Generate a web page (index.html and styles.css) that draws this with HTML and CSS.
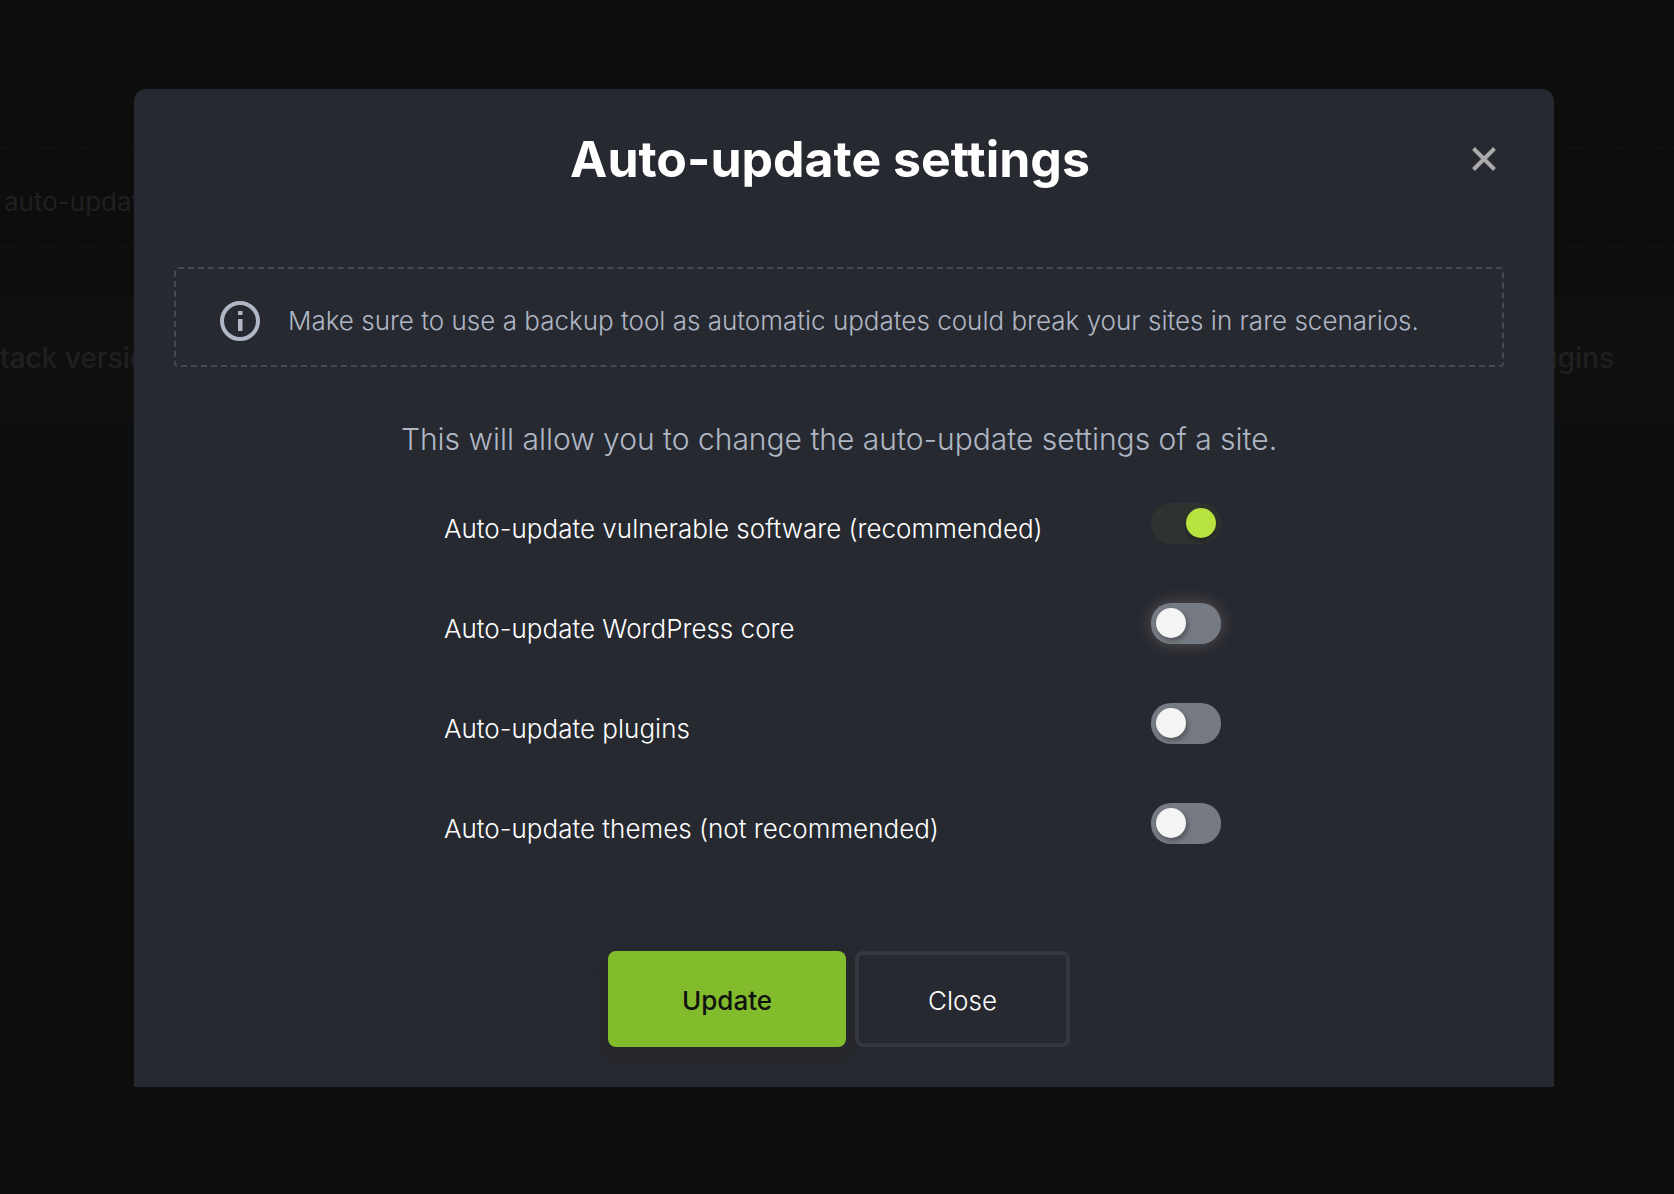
FILE: index.html
```html
<!DOCTYPE html>
<html lang="en">
<head>
<meta charset="utf-8">
<meta name="viewport" content="width=device-width, initial-scale=1">
<title>Auto-update settings</title>
<link rel="stylesheet" href="styles.css">
</head>
<body>
<main class="page" aria-hidden="true">
  <div class="page-notice">auto-update</div>
  <div class="sites">
    <div class="sites-head"><span>tack version</span><span>Plugins</span></div>
    <div class="sites-body"></div>
  </div>
</main>
<div class="overlay">
  <section class="modal" role="dialog" aria-modal="true" aria-labelledby="modal-title">
    <header class="modal-header">
      <h1 class="modal-title" id="modal-title">Auto-update settings</h1>
      <button class="modal-x" type="button" aria-label="Close dialog">
        <svg width="24" height="24" viewBox="0 0 24 24" fill="none" stroke="currentColor" stroke-width="4" stroke-linecap="butt"><path d="M1.500 1.500l21 21M22.500 1.500l-21 21"/></svg>
      </button>
    </header>
    <div class="alert">
      <svg class="alert-icon" width="40" height="40" viewBox="0 0 40 40"><circle cx="20" cy="20" r="18" fill="none" stroke="currentColor" stroke-width="4"/><path fill="currentColor" d="M18 10h4.500v4H18zM18 18h4.500v12H18z"/></svg>
      <p class="alert-text">Make sure to use a backup tool as automatic updates could break your sites in rare scenarios.</p>
    </div>
    <p class="description">This will allow you to change the auto-update settings of a site.</p>
    <form class="settings">
      <div class="setting">
        <label class="setting-label" for="vulnerable">Auto-update vulnerable software (recommended)</label>
        <input class="toggle" type="checkbox" id="vulnerable" checked>
      </div>
      <div class="setting">
        <label class="setting-label" for="core">Auto-update WordPress core</label>
        <input class="toggle toggle-focus" type="checkbox" id="core">
      </div>
      <div class="setting">
        <label class="setting-label" for="plugins">Auto-update plugins</label>
        <input class="toggle" type="checkbox" id="plugins">
      </div>
      <div class="setting">
        <label class="setting-label" for="themes">Auto-update themes (not recommended)</label>
        <input class="toggle" type="checkbox" id="themes">
      </div>
    </form>
    <footer class="actions">
      <button class="button button-primary" type="button">Update</button>
      <button class="button button-secondary" type="button">Close</button>
    </footer>
  </section>
</div>
</body>
</html>
```
FILE: styles.css
```css
* {
  box-sizing: border-box;
}

body {
  margin: 0;
  background: #0d0d0d;
  color: #fff;
  font-family: Inter, "Liberation Sans", sans-serif;
}

h1,
p {
  margin: 0;
}

/* Dimmed page behind the dialog */
.page {
  min-height: 100vh;
  padding-top: 147px;
  color: #1f2021;
}

.page-notice {
  height: 101px;
  padding-left: 4px;
  border: dashed #111;
  border-width: 2px 0;
  font-size: 26px;
  line-height: 106px;
}

.sites {
  margin-top: 48px;
}

.sites-head {
  display: flex;
  justify-content: space-between;
  padding: 32px 60px 32px 0;
  background: #0f0f0f;
  font-size: 28px;
  font-weight: 500;
  line-height: 60px;
}

.sites-body {
  height: 424px;
  background: #0c0e10;
  border-bottom: 3px solid #0f0f0f;
}

/* Dialog */
.overlay {
  position: absolute;
  inset: 0;
  padding: 89px 120px 0 134px;
}

.modal {
  padding: 40px 50px 40px 40px;
  border-radius: 12px 12px 0 0;
  background: #272930;
}

.modal-header {
  display: flex;
  align-items: center;
  padding-left: 22px;
}

.modal-title {
  flex: 1;
  font-size: 50px;
  font-weight: 700;
  line-height: 60px;
  text-align: center;
}

.modal-x {
  display: grid;
  place-items: center;
  width: 40px;
  height: 40px;
  padding: 0;
  border: 0;
  background: none;
  color: #aaa;
}

.alert {
  display: flex;
  align-items: center;
  gap: 28px;
  min-height: 100px;
  margin-top: 78px;
  padding: 8px 44px 0;
  border: 2px dashed #464953;
  border-radius: 4px;
  color: #afb6c4;
}

.alert-icon {
  flex: none;
}

.alert-text {
  font-size: 26px;
  font-weight: 300;
  line-height: 40px;
}

.description {
  margin-top: 52px;
  color: #afb6c4;
  font-size: 30px;
  font-weight: 300;
  line-height: 40px;
  text-align: center;
}

.settings {
  margin-top: 14px;
  padding: 0 283px 0 270px;
}

.setting {
  display: flex;
  align-items: center;
  justify-content: space-between;
  height: 100px;
}

.setting-label {
  padding-top: 12px;
  font-size: 26px;
  font-weight: 300;
  line-height: 40px;
}

.toggle {
  flex: none;
  appearance: none;
  width: 70px;
  height: 41px;
  margin: 0;
  padding: 5px;
  border-radius: 20px;
  background: #767a82;
}

.toggle::before {
  content: "";
  display: block;
  width: 30px;
  height: 30px;
  border-radius: 50%;
  background: #f4f4f4;
  box-shadow: 2px 3px 5px rgba(0, 0, 0, 0.3);
}

.toggle:checked {
  background: #2e332f;
}

.toggle:checked::before {
  margin-left: auto;
  background: #b8e23d;
  box-shadow: 0 3px 5px rgba(0, 0, 0, 0.3);
}

.toggle-focus {
  box-shadow: 0 0 16px rgba(120, 112, 108, 0.6);
}

.actions {
  display: flex;
  justify-content: center;
  gap: 9px;
  margin-top: 78px;
}

.button {
  height: 96px;
  padding-top: 4px;
  border-radius: 8px;
  font-family: inherit;
  font-size: 26px;
  line-height: 40px;
}

.button-primary {
  width: 238px;
  border: 0;
  background: #82bb2c;
  box-shadow: 0 8px 16px rgba(38, 38, 38, 0.8);
  color: #111;
  font-weight: 500;
}

.button-secondary {
  width: 215px;
  border: 4px solid #35373f;
  background: transparent;
  color: #fff;
  font-weight: 300;
}
```
